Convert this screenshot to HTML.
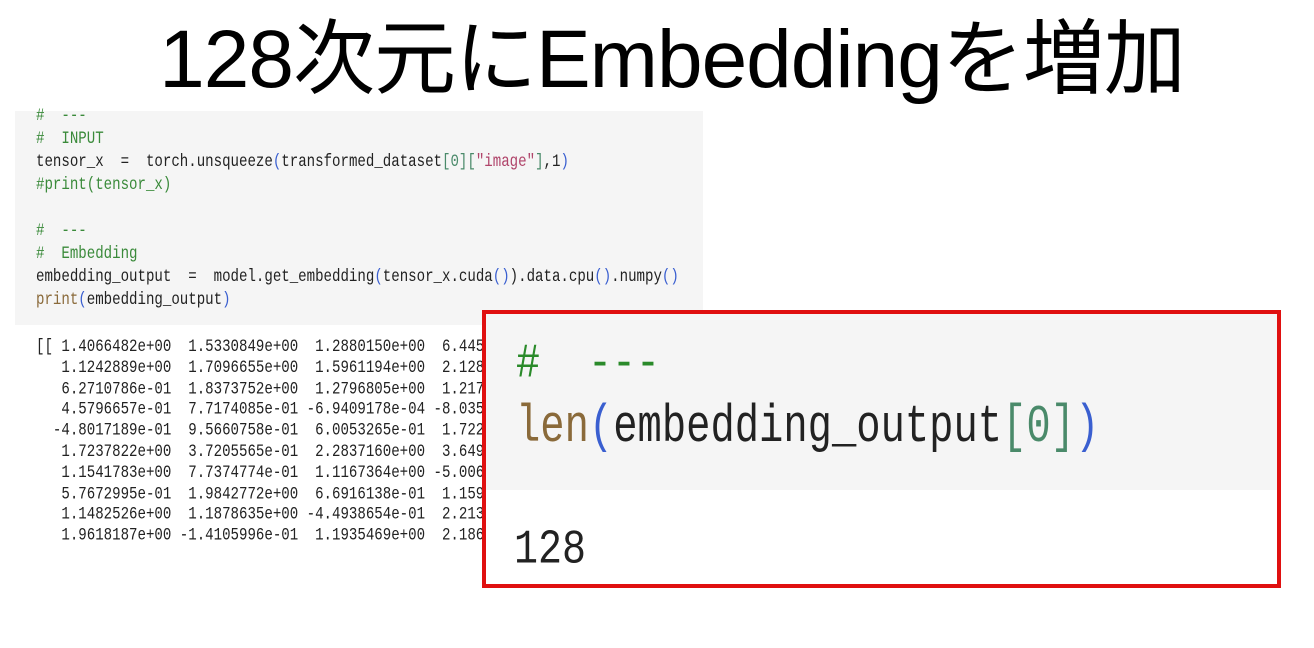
<!DOCTYPE html>
<html><head><meta charset="utf-8"><style>
body{margin:0;width:1314px;height:648px;background:#fff;position:relative;overflow:hidden;font-family:"Liberation Sans","Noto Sans CJK JP",sans-serif}
.title{position:absolute;left:0;width:1344px;top:12px;text-align:center;font-size:82px;line-height:96px;color:#000;letter-spacing:-1px}
.cell{position:absolute;left:15px;top:111px;width:688px;height:214px;background:#f5f5f5}
.mono{font-family:"Liberation Mono",monospace;white-space:pre;position:absolute;transform-origin:0 0}
.code{left:36px;font-size:14.1px;color:#222;transform:scaleY(1.25)}
.g{color:#3a8a3a}.b{color:#3a5fd0}.br{color:#8a6a3a}.s{color:#b0446a}.gr{color:#4a8a6a}
.out{position:absolute;left:0;top:337px;width:490px;height:212px;overflow:hidden}
.box{position:absolute;left:482px;top:310px;width:791px;height:270px;border:4px solid #e01010;background:#fff}
.boxg{position:absolute;left:0;top:0;width:791px;height:176px;background:#f5f5f5}
</style></head><body>
<div class="title">128次元にEmbeddingを増加</div>
<div class="cell"></div>
<div class="mono code g" style="top:106px">#  ---</div>
<div class="mono code g" style="top:129px">#  INPUT</div>
<div class="mono code" style="top:152px">tensor_x  =  torch.unsqueeze<span class="b">(</span>transformed_dataset<span class="gr">[0][</span><span class="s">"image"</span><span class="gr">]</span>,1<span class="b">)</span></div>
<div class="mono code g" style="top:175px">#print(tensor_x)</div>
<div class="mono code g" style="top:221px">#  ---</div>
<div class="mono code g" style="top:244px">#  Embedding</div>
<div class="mono code" style="top:267px">embedding_output  =  model.get_embedding<span class="b">(</span>tensor_x.cuda<span class="b">()</span>).data.cpu<span class="b">()</span>.numpy<span class="b">()</span></div>
<div class="mono code" style="top:290px"><span class="br">print</span><span class="b">(</span>embedding_output<span class="b">)</span></div>
<div class="out">
<div class="mono code" style="top:0px;line-height:16.8px">[[ 1.4066482e+00  1.5330849e+00  1.2880150e+00  6.4450000e-01
   1.1242889e+00  1.7096655e+00  1.5961194e+00  2.1280000e+00
   6.2710786e-01  1.8373752e+00  1.2796805e+00  1.2170000e+00
   4.5796657e-01  7.7174085e-01 -6.9409178e-04 -8.0350000e-01
  -4.8017189e-01  9.5660758e-01  6.0053265e-01  1.7220000e+00
   1.7237822e+00  3.7205565e-01  2.2837160e+00  3.6490000e-01
   1.1541783e+00  7.7374774e-01  1.1167364e+00 -5.0060000e-01
   5.7672995e-01  1.9842772e+00  6.6916138e-01  1.1590000e+00
   1.1482526e+00  1.1878635e+00 -4.4938654e-01  2.2130000e+00
   1.9618187e+00 -1.4105996e-01  1.1935469e+00  2.1860000e+00
   1.3333333e+00  1.3333333e+00  1.3333333e+00  1.3333333e+00</div>
</div>
<div class="box"><div class="boxg"></div>
<div class="mono" style="left:30px;top:24px;font-size:40px;color:#2a8a2a;transform:scaleY(1.2)">#  ---</div>
<div class="mono" style="left:30px;top:84px;font-size:40.5px;color:#222;transform:scaleY(1.3)"><span class="br">len</span><span class="b">(</span>embedding_output<span class="gr">[0]</span><span class="b">)</span></div>
<div class="mono" style="left:28px;top:210px;font-size:40px;color:#222;transform:scaleY(1.2)">128</div>
</div>
</body></html>
